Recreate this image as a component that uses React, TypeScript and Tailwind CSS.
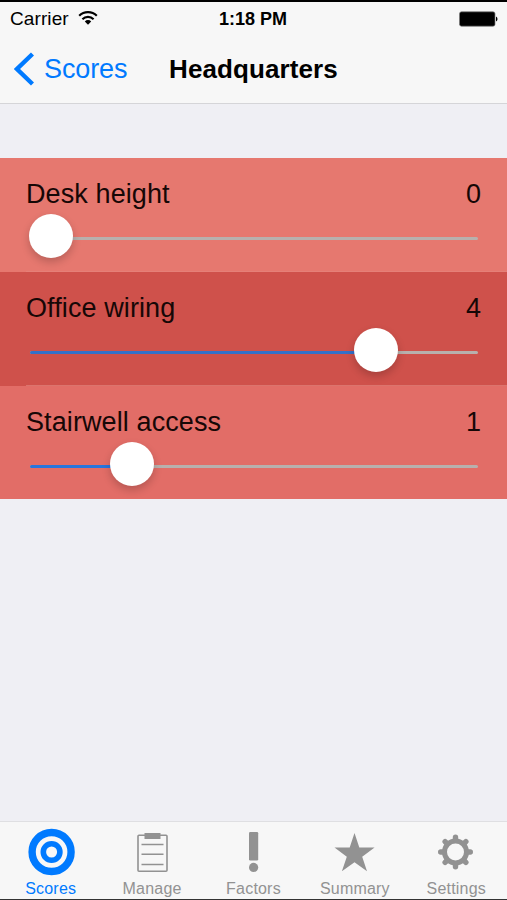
import type { ReactNode } from "react";

const factors = [
  { name: "Desk height", value: 0, row: "h-[114px] bg-[#e6786f]", divider: "bg-[#e58078]", fill: "" },
  { name: "Office wiring", value: 4, row: "h-[114px] bg-[#cf514b]", divider: "bg-[#dc746d]", fill: "bg-[#3570c8]" },
  { name: "Stairwell access", value: 1, row: "h-[113px] bg-[#e26d67]", divider: "", fill: "bg-[#2875dd]" },
];

const MAX_VALUE = 5;

type Tab = { label: string; icon: ReactNode; active?: boolean };

const tabs: Tab[] = [
  {
    label: "Scores",
    active: true,
    icon: (
      <svg className="h-[52px] w-[52px]" viewBox="0 0 52 52" fill="none" stroke="currentColor">
        <circle cx="26.6" cy="26" r="19.5" strokeWidth="7.4" />
        <circle cx="26.6" cy="26" r="8.3" strokeWidth="5.6" />
      </svg>
    ),
  },
  {
    label: "Manage",
    icon: (
      <svg className="h-[52px] w-[52px]" viewBox="0 0 52 52" fill="none" stroke="currentColor">
        <rect x="12" y="9.3" width="29" height="36" rx="1" strokeWidth="1.6" />
        <path d="M15.5 18.5h22M15.5 28.3h22M15.5 38.5h22" strokeWidth="1.4" />
        <rect x="18.5" y="7" width="16" height="6" fill="currentColor" stroke="none" />
      </svg>
    ),
  },
  {
    label: "Factors",
    icon: (
      <svg className="h-[52px] w-[52px]" viewBox="0 0 52 52" fill="currentColor">
        <rect x="22" y="6" width="9.2" height="28.5" rx="1.2" />
        <circle cx="26.6" cy="41.4" r="4.6" />
      </svg>
    ),
  },
  {
    label: "Summary",
    icon: (
      <svg className="h-[52px] w-[52px]" viewBox="0 0 52 52" fill="currentColor">
        <path d="M25.5 7l4.8 14.6h15.3L33.2 30.7l4.8 14.6-12.5-9-12.6 9 4.9-14.6L5.5 21.6h15.2z" />
      </svg>
    ),
  },
  {
    label: "Settings",
    icon: (
      <svg className="h-[52px] w-[52px]" viewBox="0 0 52 52" fill="none" stroke="currentColor">
        <circle cx="25.5" cy="26" r="11" strokeWidth="5" />
        <path
          d="M25.5 14V11.2M25.5 38V40.8M13.5 26H10.7M37.5 26H40.3M17 17.5L15.1 15.6M34 34.5L35.9 36.4M17 34.5L15.1 36.4M34 17.5L35.9 15.6"
          strokeWidth="5.4"
          strokeLinecap="round"
        />
      </svg>
    ),
  },
];

function StatusBar() {
  return (
    <div className="grid h-8 grid-cols-3 items-center pl-[10px] pr-[9px] text-black">
      <div className="flex items-center gap-[9px]">
        <span className="pt-px text-[19px] leading-8 tracking-[0.1px]">Carrier</span>
        <svg className="h-[15px] w-5" viewBox="0 0 20 15" fill="none" stroke="currentColor">
          <path d="M1.2 4.8a12.6 12.6 0 0 1 17.6 0" strokeWidth="2.2" />
          <path d="M4.4 8.2a8 8 0 0 1 11.2 0" strokeWidth="2.1" />
          <path d="M10 13.7l-3.2-3.3a4.6 4.6 0 0 1 6.4 0z" fill="currentColor" stroke="none" />
        </svg>
      </div>
      <span className="pr-[2px] pt-px text-center text-[18px] font-bold leading-8">1:18 PM</span>
      <svg className="h-4 w-[40px] justify-self-end" viewBox="0 0 40 16">
        <rect x="1.5" y="0.8" width="35.5" height="14.4" rx="2" fill="#000" stroke="#777" strokeWidth="0.7" />
        <path d="M38 5.5a2.8 2.8 0 0 1 0 5z" fill="#000" />
      </svg>
    </div>
  );
}

function NavBar() {
  return (
    <div className="grid h-[69px] grid-cols-[1fr_auto_1fr] items-center pl-[14px] pr-[14px]">
      <button className="flex items-center gap-[10px] text-[#007aff]">
        <svg className="h-[34px] w-5" viewBox="0 0 20 34" fill="none" stroke="currentColor">
          <path d="M18.5 2L3 17l15.5 15" strokeWidth="4.4" />
        </svg>
        <span className="text-[27px] leading-9 tracking-[-0.1px]">Scores</span>
      </button>
      <h1 className="text-[26px] font-bold leading-9 tracking-[0.1px]">Headquarters</h1>
    </div>
  );
}

function Slider({ value, fill }: { value: number; fill: string }) {
  const ratio = value / MAX_VALUE;
  return (
    <div className="relative flex h-11 items-center pt-[5px]">
      <div className="mx-px h-[3px] w-full overflow-hidden rounded-full bg-[#b8b0ad]">
        <div className={`h-full ${fill}`} style={{ width: `${ratio * 100}%` }} />
      </div>
      <div
        className="absolute top-0 h-11 w-11 rounded-full bg-white shadow-[0_4px_8px_rgba(0,0,0,0.2)]"
        style={{ left: `calc(${ratio} * (100% - 44px))` }}
      />
    </div>
  );
}

export default function App() {
  return (
    <div className="flex h-[900px] w-full flex-col overflow-hidden border-b border-t-2 border-b-[#333] border-t-black bg-[#efeff4] font-['Liberation_Sans',Arial,sans-serif]">
      <header className="border-b border-[#d5d5d8] bg-[#f7f7f7]">
        <StatusBar />
        <NavBar />
      </header>

      <main className="flex-1 pt-[54px]">
        {factors.map((factor) => (
          <section key={factor.name} className={`flex flex-col ${factor.row}`}>
            <div className="flex h-14 items-center justify-between px-[26px] pt-[15px] text-[27px] leading-9 tracking-[0.1px] text-[#160706]">
              <span>{factor.name}</span>
              <span>{factor.value}</span>
            </div>
            <div className="pl-[29px] pr-7">
              <Slider value={factor.value} fill={factor.fill} />
            </div>
            <div className={`ml-[26px] mt-auto h-px ${factor.divider}`} />
          </section>
        ))}
      </main>

      <nav className="grid h-[78px] grid-cols-5 border-t border-[#dfdfe2] bg-[#f7f7f7]">
        {tabs.map((tab) => (
          <button
            key={tab.label}
            className={`flex flex-col items-center pt-1 ${tab.active ? "text-[#007aff]" : "text-[#929292]"}`}
          >
            {tab.icon}
            <span className="pt-px text-[16px] leading-5 tracking-[0.2px]">{tab.label}</span>
          </button>
        ))}
      </nav>
    </div>
  );
}
